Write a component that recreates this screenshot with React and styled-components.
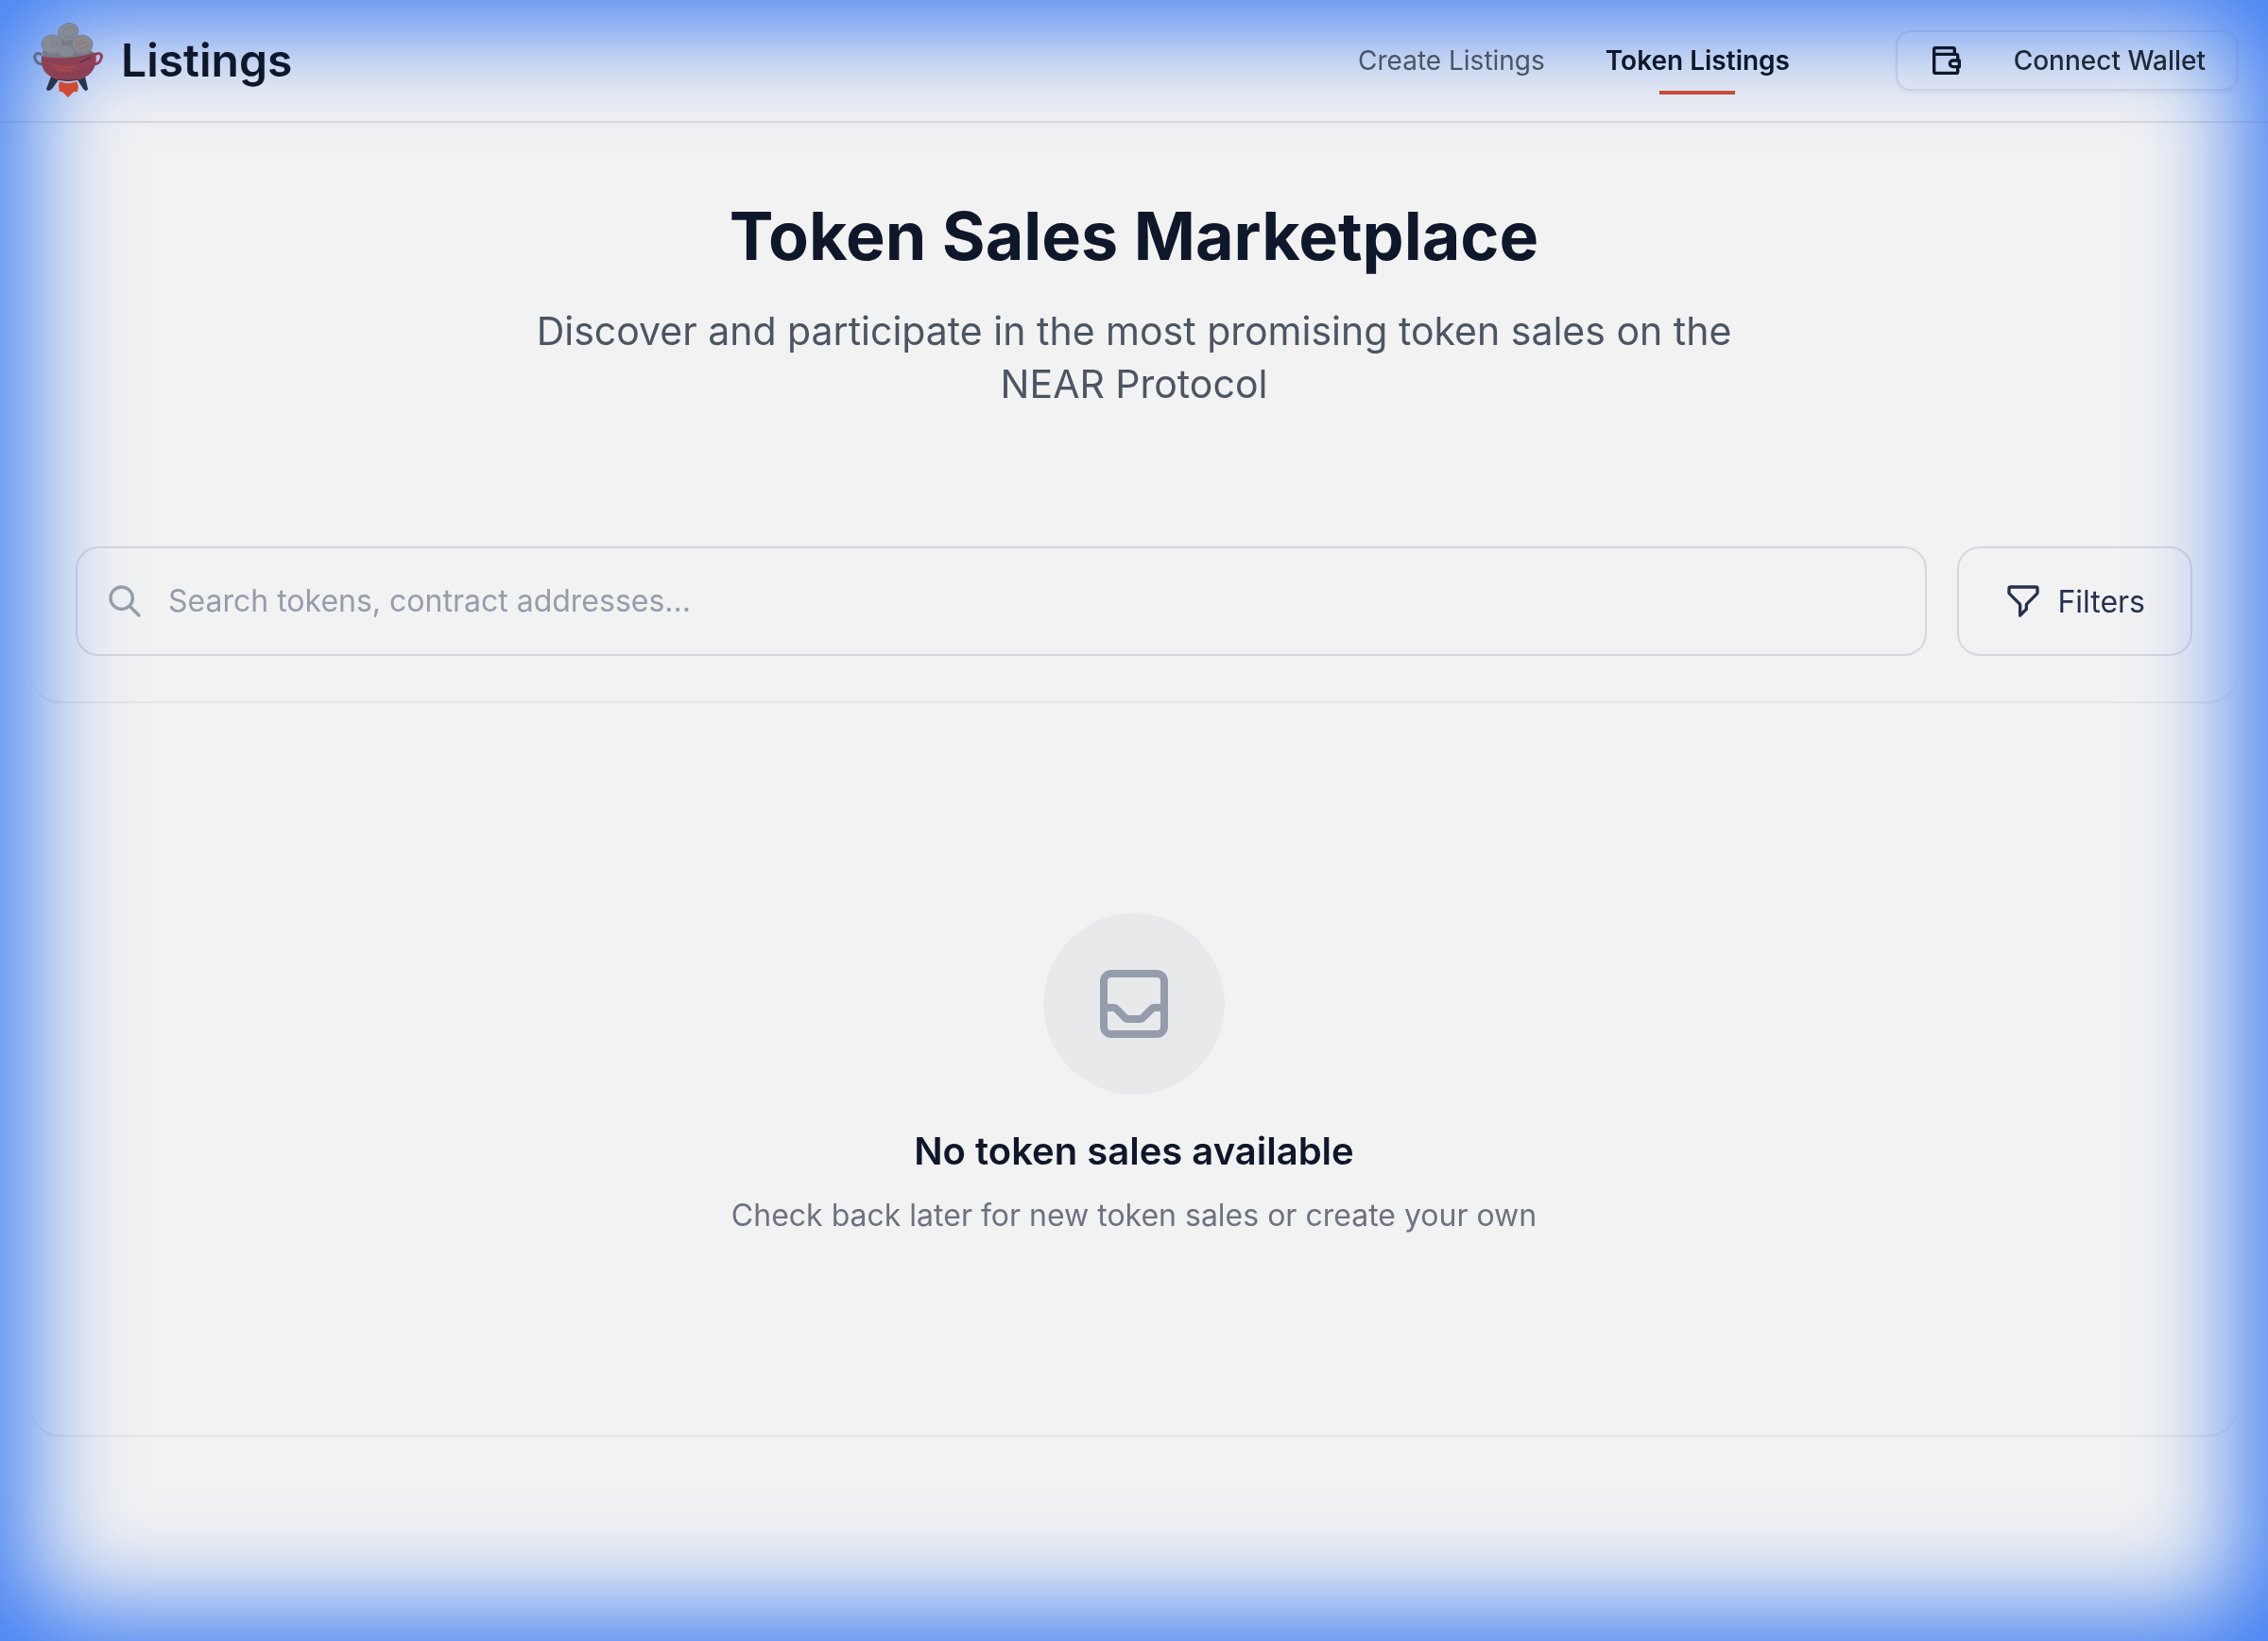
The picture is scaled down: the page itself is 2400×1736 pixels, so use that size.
import React, { useState } from "react";
import styled, { createGlobalStyle } from "styled-components";

const App = () => {
  const [query, setQuery] = useState("");
  return (
    <>
      <GlobalStyle />
      <Page>
        <Header>
          <Brand href="#">
            <CauldronLogo />
            <span>Listings</span>
          </Brand>
          <Nav>
            <NavLink href="#create">Create Listings</NavLink>
            <NavLink href="#listings" $active>
              Token Listings
            </NavLink>
          </Nav>
          <WalletButton type="button">
            <WalletIcon />
            Connect Wallet
          </WalletButton>
        </Header>
        <Main>
          <Hero>
            <h1>Token Sales Marketplace</h1>
            <p>
              Discover and participate in the most promising token sales on the
              NEAR Protocol
            </p>
          </Hero>
          <SearchCard>
            <SearchBox>
              <OutlineIcon d="M21 21l-6-6m2-5a7 7 0 11-14 0 7 7 0 0114 0z" />
              <input
                type="text"
                aria-label="Search tokens"
                placeholder="Search tokens, contract addresses..."
                value={query}
                onChange={(e) => setQuery(e.target.value)}
              />
            </SearchBox>
            <FilterButton type="button">
              <OutlineIcon d="M3 4a1 1 0 011-1h16a1 1 0 011 1v2.586a1 1 0 01-.293.707l-6.414 6.414a1 1 0 00-.293.707V17l-4 4v-6.586a1 1 0 00-.293-.707L3.293 7.293A1 1 0 013 6.586V4z" />
              Filters
            </FilterButton>
          </SearchCard>
          <EmptyCard>
            <EmptyBadge>
              <OutlineIcon
                $size={96}
                d="M20 13V6a2 2 0 00-2-2H6a2 2 0 00-2 2v7m16 0v5a2 2 0 01-2 2H6a2 2 0 01-2-2v-5m16 0h-2.586a1 1 0 00-.707.293l-2.414 2.414a1 1 0 01-.707.293h-3.172a1 1 0 01-.707-.293l-2.414-2.414A1 1 0 006.586 13H4"
              />
            </EmptyBadge>
            <h2>No token sales available</h2>
            <p>Check back later for new token sales or create your own</p>
          </EmptyCard>
        </Main>
      </Page>
      <Glow />
    </>
  );
};

const OutlineIcon = ({ d, $size }) => (
  <Icon $size={$size} viewBox="0 0 24 24" aria-hidden="true">
    <path d={d} />
  </Icon>
);

const WalletIcon = () => (
  <Icon $size={40} viewBox="0 0 24 24" aria-hidden="true">
    <path d="M17 8V5a1 1 0 0 0-1-1H5a1 1 0 0 0-1 1v14a1 1 0 0 0 1 1h13a1 1 0 0 0 1-1v-3M4 8h14a1 1 0 0 1 1 1v3" />
    <path d="M20 12v4h-4a2 2 0 0 1 0-4z" />
  </Icon>
);

const CauldronLogo = () => (
  <Logo viewBox="0 0 80 80" aria-hidden="true">
    <g fill="none" strokeWidth="3">
      <path d="M12 34c-4-3-8-1-7 4 1 4 4 6 9 6" stroke="#5f6a8a" />
      <path d="M68 34c5-3 9-1 7 4-1 4-4 6-9 6" stroke="#94425c" />
    </g>
    <path d="M22 57l9 2-8 11q-5 4-6 0z" fill="#263650" />
    <path d="M58 57l-9 2 7 11q4 4 5 0z" fill="#263650" />
    <path d="M31 62q9 4 18 0l2 5-1 6h-4l-6 6-6-6h-3l-1-6z" fill="#cf4a35" />
    <path d="M12 35q28-10 57-3c2 9 0 17-7 23-11 9-32 9-42 1C13 51 11 44 12 35z" fill="#8c4054" />
    <path d="M12 39c12 8 38 8 56-3l-1 8c-14 10-40 12-53 1z" fill="#914256" />
    <path d="M24 45q12 4 23 1M28 49q9 3 16 0" stroke="#c94c40" strokeWidth="2" strokeDasharray="1 1" fill="none" />
    <path d="M13 30l10-10 18-6 16 8 10 10q-26 8-54 4z" fill="#777b88" />
    <g fill="#868a95" stroke="#7a7f8d" strokeWidth="1">
      <ellipse cx="55" cy="23" rx="11" ry="10" />
      <ellipse cx="38" cy="30" rx="9" ry="6" />
      <ellipse cx="23" cy="23" rx="11" ry="10" />
      <ellipse cx="40" cy="10" rx="11" ry="9" transform="rotate(-25 40 10)" />
      <ellipse cx="41" cy="10" rx="7" ry="5" transform="rotate(-35 41 10)" />
      <circle cx="25" cy="22" r="3" />
    </g>
    <path d="M48 25l12-5M52 29l10-5M48 21l9-3" stroke="#ad6560" strokeWidth="2" strokeDasharray="1 1" />
    <path d="M52 42l12-5M30 60q10 3 20 0" stroke="#33334c" strokeWidth="1" fill="none" />
  </Logo>
);

const GlobalStyle = createGlobalStyle`
  * {
    box-sizing: border-box;
  }
  body {
    margin: 0;
    background: #f2f2f2;
    color: #0f172a;
    font-family: Inter, "Liberation Sans", sans-serif;
  }
  h1, h2, p {
    margin: 0;
  }
  button, input {
    font-family: inherit;
  }
`;
const Page = styled.div`
  min-height: 100vh;
`;
// blue light that comes in from every side of the window
const Glow = styled.div`
  position: fixed;
  inset: 0;
  pointer-events: none;
  box-shadow: inset 0 0 108px 30px #3d7cf3;
  z-index: -1;
`;
const Header = styled.header`
  display: flex;
  align-items: center;
  height: 130px;
  padding: 0 32px;
  border-bottom: 2px solid rgba(110, 120, 160, 0.2);
`;
const Brand = styled.a`
  display: flex;
  align-items: center;
  gap: 16px;
  margin-right: auto;
  color: inherit;
  font-size: 48px;
  font-weight: 600;
  line-height: 56px;
  text-decoration: none;
`;
const Logo = styled.svg`
  width: 80px;
  height: 80px;
`;
const Nav = styled.nav`
  display: flex;
  gap: 64px;
  margin-right: 112px;
`;
const NavLink = styled.a`
  position: relative;
  color: ${(props) => (props.$active ? "#0f172a" : "#4b5563")};
  font-size: 28px;
  font-weight: ${(props) => (props.$active ? 600 : 400)};
  line-height: 40px;
  text-decoration: none;
  &::after {
    content: "";
    display: ${(props) => (props.$active ? "block" : "none")};
    position: absolute;
    bottom: -16px;
    left: 50%;
    width: 80px;
    height: 4px;
    margin-left: -40px;
    background: #c94a3a;
  }
`;
const WalletButton = styled.button`
  display: flex;
  align-items: center;
  justify-content: space-between;
  width: 362px;
  height: 64px;
  padding: 0 32px;
  border: 2px solid rgba(100, 130, 200, 0.2);
  border-radius: 16px;
  background: transparent;
  box-shadow: 0 2px 4px rgba(0, 0, 0, 0.05);
  color: #1f2937;
  font-size: 28px;
  font-weight: 500;
  svg {
    color: #0f172a;
  }
`;
const Main = styled.main`
  display: flex;
  flex-direction: column;
  padding: 80px 32px;
`;
const Hero = styled.section`
  display: flex;
  flex-direction: column;
  align-items: center;
  gap: 32px;
  margin-bottom: 96px;
  text-align: center;
  h1 {
    font-size: 70px;
    font-weight: 700;
    line-height: 80px;
  }
  p {
    max-width: 1344px;
    color: #4b5563;
    font-size: 41px;
    line-height: 56px;
  }
`;
const Card = styled.section`
  border-radius: 32px;
  box-shadow: 0 2px 3px -1px rgba(15, 23, 42, 0.1);
`;
const SearchCard = styled(Card)`
  display: flex;
  gap: 32px;
  padding: 48px;
`;
const SearchBox = styled.label`
  display: flex;
  flex: 1;
  align-items: center;
  gap: 26px;
  height: 116px;
  padding: 0 30px;
  border: 2px solid rgba(100, 110, 150, 0.2);
  border-radius: 24px;
  color: #959cab;
  input {
    flex: 1;
    padding: 0;
    border: none;
    outline: none;
    background: transparent;
    color: #0f172a;
    font-size: 32px;
    line-height: 48px;
  }
  input::placeholder {
    color: #959cab;
  }
`;
const FilterButton = styled.button`
  display: flex;
  align-items: center;
  gap: 16px;
  height: 116px;
  padding: 0 48px;
  border: 2px solid rgba(100, 110, 150, 0.2);
  border-radius: 24px;
  background: transparent;
  color: #263150;
  font-size: 32px;
`;
const EmptyCard = styled(Card)`
  display: flex;
  flex-direction: column;
  align-items: center;
  margin-top: 64px;
  padding: 160px 32px 208px;
  text-align: center;
  h2 {
    margin: 32px 0 16px;
    font-size: 40px;
    font-weight: 600;
    line-height: 56px;
  }
  p {
    color: #6b7280;
    font-size: 32px;
    line-height: 48px;
  }
`;
const EmptyBadge = styled.div`
  display: flex;
  align-items: center;
  justify-content: center;
  width: 192px;
  height: 192px;
  border-radius: 50%;
  background: #e7e9eb;
  color: #959cab;
`;
const Icon = styled.svg`
  flex: none;
  width: ${(props) => props.$size || 40}px;
  height: ${(props) => props.$size || 40}px;
  fill: none;
  stroke: currentColor;
  stroke-width: 2;
  stroke-linecap: round;
  stroke-linejoin: round;
`;

export default App;
